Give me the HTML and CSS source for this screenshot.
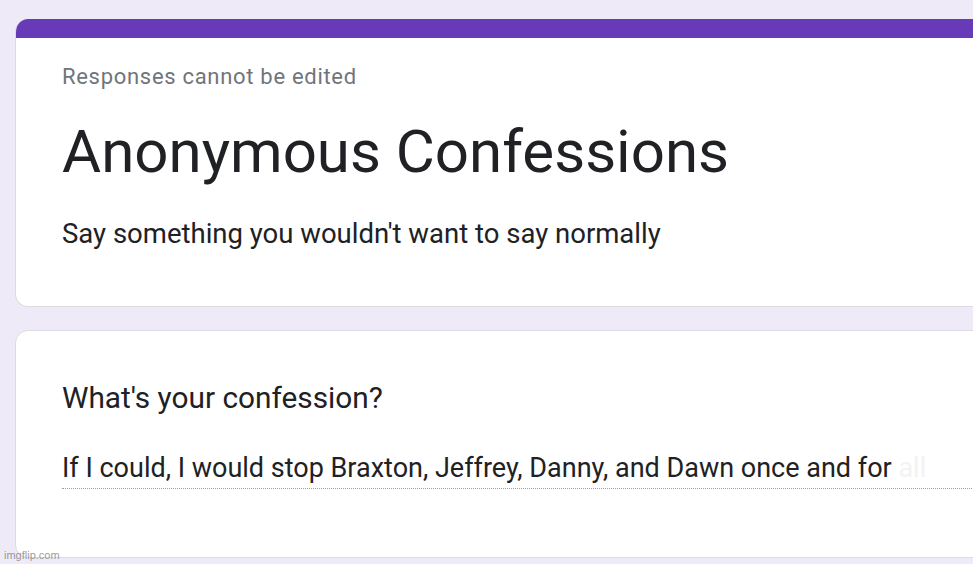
FILE: index.html
```html
<!DOCTYPE html>
<html>
<head>
<meta charset="utf-8">
<link rel="stylesheet" href="styles.css">
</head>
<body>
<main class="page">
  <section class="card header-card">
    <div class="band"></div>
    <div class="header-body">
      <div class="notice">Responses cannot be edited</div>
      <h1 class="title">Anonymous Confessions</h1>
      <p class="desc">Say something you wouldn't want to say normally</p>
    </div>
  </section>
  <section class="card question-card">
    <div class="question">What's your confession?</div>
    <div class="answer"><span>If I could, I would stop Braxton, Jeffrey, Danny, and Dawn once and for</span> <span class="faded">all</span></div>
  </section>
</main>
<div class="watermark">imgflip.com</div>
</body>
</html>
```
FILE: styles.css
```css
html, body {
  margin: 0;
  padding: 0;
  height: 100%;
  overflow: hidden;
}
body {
  background: #efeaf7;
  font-family: Roboto, "Liberation Sans", Arial, sans-serif;
  color: #202124;
  position: relative;
}
.page {
  padding: 19px 0 0 15px;
  display: flex;
  flex-direction: column;
  gap: 23px;
  width: 1000px;
}
.card {
  background: #fff;
  border: 1px solid #dadce0;
  border-radius: 13px;
  overflow: hidden;
  box-sizing: border-box;
}
.header-card {
  height: 288px;
  border-top: none;
}
.band {
  height: 19px;
  background: #673ab7;
}
.header-body {
  padding: 0 0 0 46px;
}
.notice {
  font-size: 22px;
  letter-spacing: 0.7px;
  color: #70757a;
  line-height: 24px;
  margin-top: 27px;
}
.title {
  font-size: 60px;
  font-weight: 400;
  line-height: 72px;
  margin: 27px 0 0;
  letter-spacing: 0;
}
.desc {
  font-size: 27.5px;
  line-height: 30px;
  margin: 31px 0 0;
}
.question-card {
  height: 228px;
  padding: 0 0 0 46px;
}
.question {
  font-size: 29.8px;
  line-height: 34px;
  margin-top: 50px;
}
.answer {
  font-size: 27px;
  line-height: 30px;
  margin-top: 38px;
  padding-bottom: 5px;
  border-bottom: 1px dotted #9aa0a6;
  white-space: nowrap;
}
.faded {
  color: #f3f3f3;
}
.watermark {
  position: absolute;
  left: 4px;
  bottom: 3px;
  font-family: "Liberation Sans", Arial, sans-serif;
  font-size: 11px;
  color: rgba(120, 120, 120, 0.75);
}
```
